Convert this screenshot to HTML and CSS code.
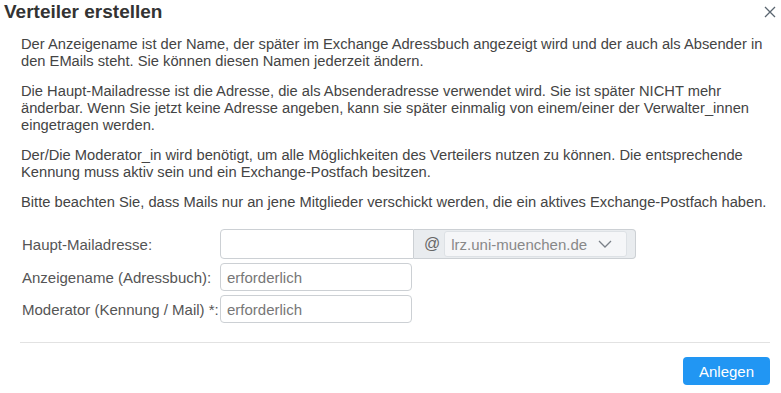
FILE: index.html
```html
<!DOCTYPE html>
<html lang="de">
<head>
  <meta charset="UTF-8">
  <title>Verteiler erstellen</title>
  <link rel="stylesheet" href="styles.css">
</head>
<body>

  <div class="dialog">
    <div class="dialog-header">
      <h2>Verteiler erstellen</h2>
      <button class="close" title="Schließen">
        <svg width="12" height="12" viewBox="0 0 12 12">
          <path d="M1 1 L11 11 M11 1 L1 11" stroke="#5a6570" stroke-width="1.3" fill="none"/>
        </svg>
      </button>
    </div>

    <div class="dialog-body">
      <p>Der Anzeigename ist der Name, der später im Exchange Adressbuch angezeigt wird und der auch als Absender in den EMails steht. Sie können diesen Namen jederzeit ändern.</p>
      <p>Die Haupt-Mailadresse ist die Adresse, die als Absenderadresse verwendet wird. Sie ist später NICHT mehr änderbar. Wenn Sie jetzt keine Adresse angeben, kann sie später einmalig von einem/einer der Verwalter_innen eingetragen werden.</p>
      <p>Der/Die Moderator_in wird benötigt, um alle Möglichkeiten des Verteilers nutzen zu können. Die entsprechende Kennung muss aktiv sein und ein Exchange-Postfach besitzen.</p>
      <p>Bitte beachten Sie, dass Mails nur an jene Mitglieder verschickt werden, die ein aktives Exchange-Postfach haben.</p>

      <div class="form">
        <label for="mail">Haupt-Mailadresse:</label>
        <div class="input-group">
          <input type="text" id="mail">
          <div class="addon">
            <span class="at">@</span>
            <div class="domain">
              <span>lrz.uni-muenchen.de</span>
              <svg width="14" height="8" viewBox="0 0 14 8">
                <path d="M1 1 L7 7 L13 1" stroke="#7a8088" stroke-width="1.3" fill="none"/>
              </svg>
            </div>
          </div>
        </div>

        <label for="name">Anzeigename (Adressbuch):</label>
        <input type="text" id="name" placeholder="erforderlich">

        <label for="moderator">Moderator (Kennung / Mail) *:</label>
        <input type="text" id="moderator" placeholder="erforderlich">
      </div>
    </div>

    <div class="dialog-footer">
      <button class="primary">Anlegen</button>
    </div>
  </div>

</body>
</html>
```

FILE: styles.css
```css
body {
  margin: 0;
  font-family: "Liberation Sans", Arial, sans-serif;
  font-size: 15px;
  color: #444;
  background: white;
}

.dialog {
  width: 781px;
  height: 393px;
}

.dialog-header {
  display: flex;
  justify-content: space-between;
  align-items: center;
  padding: 0 5px 0 4px;
  height: 24px;
}

.dialog-header h2 {
  margin: 0;
  font-size: 19px;
  font-weight: bold;
  color: #333;
}

.close {
  border: none;
  background: none;
  padding: 0;
  width: 12px;
  height: 12px;
  cursor: pointer;
}

.dialog-body {
  padding: 12px 10px 0 21px;
}

p {
  margin: 0 0 13px 0;
  line-height: 17px;
  font-size: 14.7px;
}

/* Form rows */
.form {
  display: grid;
  grid-template-columns: 199px auto;
  justify-content: start;
  align-items: center;
  row-gap: 4px;
  margin-top: 18px;
}

.form label {
  padding-left: 1px;
  color: #555;
}

input {
  width: 192px;
  height: 28px;
  box-sizing: border-box;
  padding: 4px 6px;
  border: 1px solid #ccd0d4;
  border-radius: 4px;
  font-family: inherit;
  font-size: 15px;
  color: #444;
}

input::placeholder {
  color: #777;
}

.input-group {
  display: flex;
  height: 30px;
}

.input-group input {
  width: 194px;
  height: 30px;
  border-radius: 4px 0 0 4px;
}

.addon {
  display: flex;
  align-items: center;
  background: #e9ecef;
  border: 1px solid #ccd0d4;
  border-left: none;
  border-radius: 0 4px 4px 0;
  padding: 0 8px 0 10px;
  gap: 4px;
}

.at {
  color: #666;
  font-size: 16px;
}

.domain {
  display: flex;
  align-items: center;
  justify-content: space-between;
  width: 183px;
  height: 26px;
  box-sizing: border-box;
  padding: 0 14px 0 6px;
  background: #f5f6f8;
  border: 1px solid #dde1e5;
  border-radius: 3px;
  color: #888;
  font-size: 15px;
}

.dialog-footer {
  margin: 19px 11px 0 20px;
  padding-top: 14px;
  border-top: 1px solid #e2e2e2;
  display: flex;
  justify-content: flex-end;
}

.primary {
  width: 87px;
  height: 28px;
  background: #2196f3;
  color: white;
  border: none;
  border-radius: 4px;
  font-family: inherit;
  font-size: 15px;
  cursor: pointer;
}
```
